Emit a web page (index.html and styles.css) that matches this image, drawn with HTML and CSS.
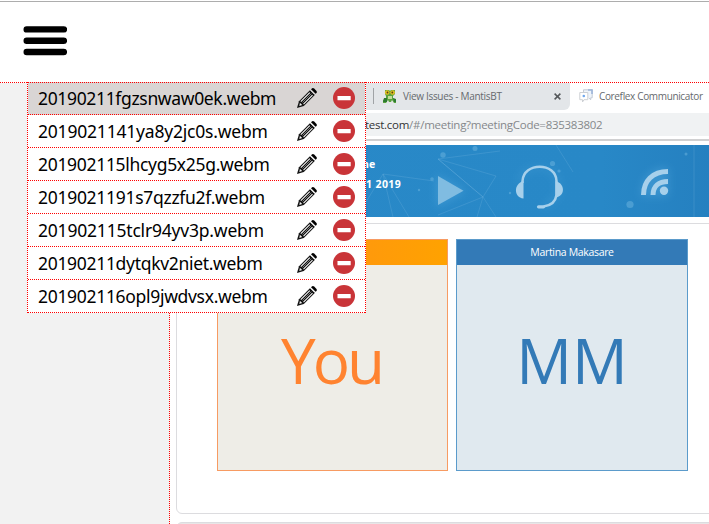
FILE: index.html
```html
<!DOCTYPE html>
<html lang="en">
<head>
<meta charset="utf-8">
<title>Recordings</title>
<link rel="stylesheet" href="styles.css">
</head>
<body>
<svg class="defs" width="0" height="0" aria-hidden="true">
  <symbol id="pencil" viewBox="0 0 20 20">
    <path d="M0 20 2 13.2 13.2 2 18 6.800 6.800 18Z" fill="#111"/>
    <path d="M14 1.200 15.200.2Q16.200-.3 17.200.6L19.500 2.900Q20.200 3.900 19.500 4.900L18.600 5.800Z" fill="#000"/>
    <path d="M3.800 13.600 12.800 4.600M6.500 16.200 15.500 7.200" fill="none" stroke="#f5f5f5" stroke-width="1.100"/>
    <path d="M5.500 14.500 14.300 5.700" fill="none" stroke="#aaa" stroke-width=".7"/>
    <path d="M2.900 14.800 5.200 17 2.300 17.900Z" fill="#eee"/>
    <path d="M13.300 2.100 17.800 6.600" stroke="#fff" stroke-width=".8"/>
  </symbol>
  <symbol id="remove" viewBox="0 0 22 22">
    <circle cx="11" cy="11" r="11" fill="#c93438"/>
    <rect x="4.500" y="9.100" width="13.200" height="4.200" rx=".4" fill="#fff"/>
  </symbol>
</svg>
<header class="topbar">
  <svg class="burger" width="44" height="31" viewBox="0 0 44 31"><path d="M3.700 4.400H40.900M3.700 15.700H40.900M3.700 27H40.900" stroke="#000" stroke-width="6.400" stroke-linecap="round"/></svg>
</header>
<main class="page">
  <aside class="sidebar"></aside>
  <section class="video">
    <div class="tabs">
      <div class="tab">
        <span class="divider"></span>
        <svg class="mantis" width="14" height="14" viewBox="0 0 14 14"><path d="M2 1h4l1 1 1-1h4v4l-2 2v2l3 2v3h-2l-2-3-1 2H6l-1-2-2 3H0v-3l3-2V7L2 5z" fill="#5aa33e"/><path d="M1 9h3v4H0zM10 9l3 1v3h-2z" fill="#2c7a31"/><circle cx="4.200" cy="3.500" r="2.300" fill="#e4bf24"/><circle cx="9.600" cy="3.500" r="2.300" fill="#e4bf24"/><circle cx="4.500" cy="3.500" r=".9" fill="#553f10"/><circle cx="9.300" cy="3.500" r=".9" fill="#553f10"/><path d="M5 7h4v3H5z" fill="#c4dc9a"/></svg>
        <span class="tab-name">View Issues - MantisBT</span>
        <svg class="close" width="7" height="7" viewBox="0 0 7 7"><path d="m.6.600 5.800 5.800m0-5.800L.6 6.400" stroke="#55585b" stroke-width="1.500"/></svg>
      </div>
      <div class="tab active">
        <svg class="chat" width="14" height="14" viewBox="0 0 14 14"><path d="M4.500 3V.8h8.700v8h-1.500v2l-2-2" fill="#eef4fb" stroke="#c3cad4"/><path d="M9 1h4v4" fill="none" stroke="#9db5da" stroke-width="1.600"/><path d="M.8 3.500h8v7.200H5L3.500 13v-2.300H.8z" fill="#fff" stroke="#cdd0d4"/><circle cx="4.800" cy="7" r="1.300" fill="#70a7ed"/></svg>
        <span class="tab-name app">Coreflex Communicator</span>
      </div>
    </div>
    <div class="toolbar"><div class="address"><b>test.com</b>/#/meeting?meetingCode=835383802</div></div>
    <div class="banner">
      <svg class="art" width="539" height="72" viewBox="170 145 539 72">
        <defs>
          <linearGradient id="sky"><stop offset="0" stop-color="#2989c8"/><stop offset=".8" stop-color="#2888c7"/><stop offset="1" stop-color="#2580c0"/></linearGradient>
          <filter id="glow" x="-60%" y="-60%" width="220%" height="220%"><feGaussianBlur stdDeviation="4"/></filter>
        </defs>
        <path d="M170 145h539v72H170z" fill="url(#sky)"/>
        <g fill="none" stroke="#7ab9e2" stroke-width=".7" opacity=".35"><path d="m438 159 58 17-13 21-45-38 45 38-6 20m6-20 13 20m-13-20-45 18m0-56 62-8M383 174l-17 28m17-28 10 43m-10-43 26 43m-26-43 51 7M556 145l17 27M694 145v72"/></g>
        <g fill="#6eb5df" opacity=".5"><circle cx="443" cy="155" r="2.700"/><circle cx="475" cy="148.500" r="2.500"/><circle cx="432" cy="179" r="1.800"/><circle cx="419" cy="190" r="1.200"/><circle cx="552.500" cy="163.500" r="2.600"/><circle cx="559" cy="171" r="1.600"/><circle cx="630" cy="204.500" r="3.600"/><circle cx="686" cy="154" r="1.500"/><circle cx="510" cy="193" r="1.200"/></g>
        <g fill="#6bb8e8" stroke="#6bb8e8" stroke-width="3" opacity=".3" filter="url(#glow)"><path d="m438 177 25 14-25 14z"/><path d="M519 182c3-19 37-19 39 0v14l-15 12" fill="none"/><path d="M642 195q2-26 25-26v26z"/></g>
        <path d="m438 176 25.500 14.800L438 205z" fill="#80bce1"/>
        <g fill="none" stroke="#a7d0eb"><path d="M522.500 183v-2c1-19 33.500-19 34 0v14c-1 7-5 10.500-13 11.500" stroke-width="2.500"/><path d="M538.500 206.800h5" stroke-width="3.200" stroke-linecap="round"/></g>
        <path d="M523.500 181v17.500c-10-1-10-15 0-17.500M555.500 181v16.500c10-1 10-14 0-16.500" fill="#a7d0eb"/>
        <g fill="none" stroke="#a7d0eb" stroke-width="5"><path d="M643.500 195c0-14 9-23.500 24.500-23.500"/><path d="M653 195c0-9 6-13.500 15-13.500"/></g><circle cx="664" cy="190.800" r="4.200" fill="#a7d0eb"/>
      </svg>
      <div class="caption"><span class="place">ne</span><span class="date">1 2019</span></div>
    </div>
    <div class="panel">
      <div class="tile you"><div class="tile-head"></div><div class="initials">You</div></div>
      <div class="tile guest"><div class="tile-head">Martina Makasare</div><div class="initials">MM</div></div>
    </div>
    <div class="panel next"></div>
  </section>
</main>
<ul class="menu">
  <li class="item selected"><span class="name n1">20190211fgzsnwaw0ek.webm</span><svg class="edit"><use href="#pencil"/></svg><svg class="remove"><use href="#remove"/></svg></li>
  <li class="item"><span class="name n2">2019021141ya8y2jc0s.webm</span><svg class="edit"><use href="#pencil"/></svg><svg class="remove"><use href="#remove"/></svg></li>
  <li class="item"><span class="name n3">201902115lhcyg5x25g.webm</span><svg class="edit"><use href="#pencil"/></svg><svg class="remove"><use href="#remove"/></svg></li>
  <li class="item"><span class="name n4">2019021191s7qzzfu2f.webm</span><svg class="edit"><use href="#pencil"/></svg><svg class="remove"><use href="#remove"/></svg></li>
  <li class="item"><span class="name n5">201902115tclr94yv3p.webm</span><svg class="edit"><use href="#pencil"/></svg><svg class="remove"><use href="#remove"/></svg></li>
  <li class="item"><span class="name n6">20190211dytqkv2niet.webm</span><svg class="edit"><use href="#pencil"/></svg><svg class="remove"><use href="#remove"/></svg></li>
  <li class="item"><span class="name n7">201902116opl9jwdvsx.webm</span><svg class="edit"><use href="#pencil"/></svg><svg class="remove"><use href="#remove"/></svg></li>
</ul>
</body>
</html>
```
FILE: styles.css
```css
* { box-sizing: border-box; }
body { margin: 0; height: 524px; overflow: hidden; position: relative; background: #fff; font-family: "Noto Sans", sans-serif; }
svg { display: block; flex: none; }
.defs { position: absolute; }
.topbar { height: 83px; padding: 25px 0 0 23px; border-bottom: 1px dotted #f00; background: linear-gradient(#fff 1px, #adadad 1px, #adadad 2px, #fff 2px); }
.page { display: flex; height: 441px; }
.sidebar { width: 170px; flex: none; background: #f2f2f2; border-right: 1px dotted #f00; }
.video { width: 539px; overflow: hidden; background: #fff; }
.tabs { display: flex; height: 27px; background: #fff; }
.tab { display: flex; align-items: center; width: 400px; padding: 0 9px 1px 203px; background: #e3e6e9; border-radius: 0 0 6px 0; color: #666a6e; }
.divider { width: 1px; height: 16px; margin-right: 9px; background: #a0a3a6; }
.tab-name { margin-left: 6px; font: 10px "Open Sans", sans-serif; letter-spacing: -.3px; white-space: nowrap; }
.tab.active { width: 139px; padding: 0 0 1px 9px; background: #fff; }
.tab-name.app { letter-spacing: -.35px; }
.close { margin-left: auto; }
.toolbar { height: 31px; padding-top: 3px; border-bottom: 2px solid #d0d0d1; }
.address { height: 23px; padding-left: 195px; background: #f0f2f3; color: #85888b; font: 11.500px/23px "Open Sans", sans-serif; letter-spacing: -.27px; white-space: nowrap; }
.address b { font-weight: 400; color: #333; }
.banner { position: relative; height: 72px; margin-top: 4px; }
.caption { position: absolute; left: 192px; top: 9px; display: grid; font: 700 10.500px/20px "Open Sans", sans-serif; color: #fff; white-space: nowrap; }
.date { padding-left: 4px; letter-spacing: .4px; }
.panel { display: flex; gap: 8px; width: 560px; height: 291px; margin: 6px 0 8px 6px; padding: 15px 0 0 40px; border: 1px solid #dcdcdf; border-radius: 6px; }
.panel.next { height: 40px; margin-top: 0; background: #e8e6e7; }
.tile { width: 231px; height: 232px; border: 1px solid #f79b62; background: #eeede7; text-align: center; }
.tile-head { height: 25px; background: linear-gradient(90deg, #ff8a1f, #ffa200); font: 10.500px/24px "Open Sans", sans-serif; letter-spacing: -.33px; color: #fff; }
.guest { width: 232px; border-color: #5b9bcb; background: #e0e9ef; }
.guest .tile-head { background: #337ab7; }
.initials { font: 62px/190px "Open Sans", sans-serif; color: #ff8330; }
.you .initials { letter-spacing: -3px; padding-right: 2px; }
.guest .initials { color: #337ab7; }
.menu { position: absolute; left: 27px; top: 82px; width: 339px; margin: 0; padding: 0; list-style: none; background: #fff; border: dotted #f00; border-width: 0 1px; }
.item { display: flex; align-items: center; height: 33px; padding-left: 10px; border-bottom: 1px dotted #f00; }
.selected { border-top: 1px dotted #f00; background: #d9d5d4; }
.name { width: 259px; font-size: 17.500px; line-height: 24px; letter-spacing: -.31px; color: #000; white-space: nowrap; }
.selected > * { margin-top: -1px; }
.n1 { letter-spacing: -.34px; }
.n2, .n5 { letter-spacing: -.2px; }
.n4 { letter-spacing: -.29px; }
.edit { width: 20px; height: 20px; }
.remove { width: 22px; height: 22px; margin-left: 16px; }
```
